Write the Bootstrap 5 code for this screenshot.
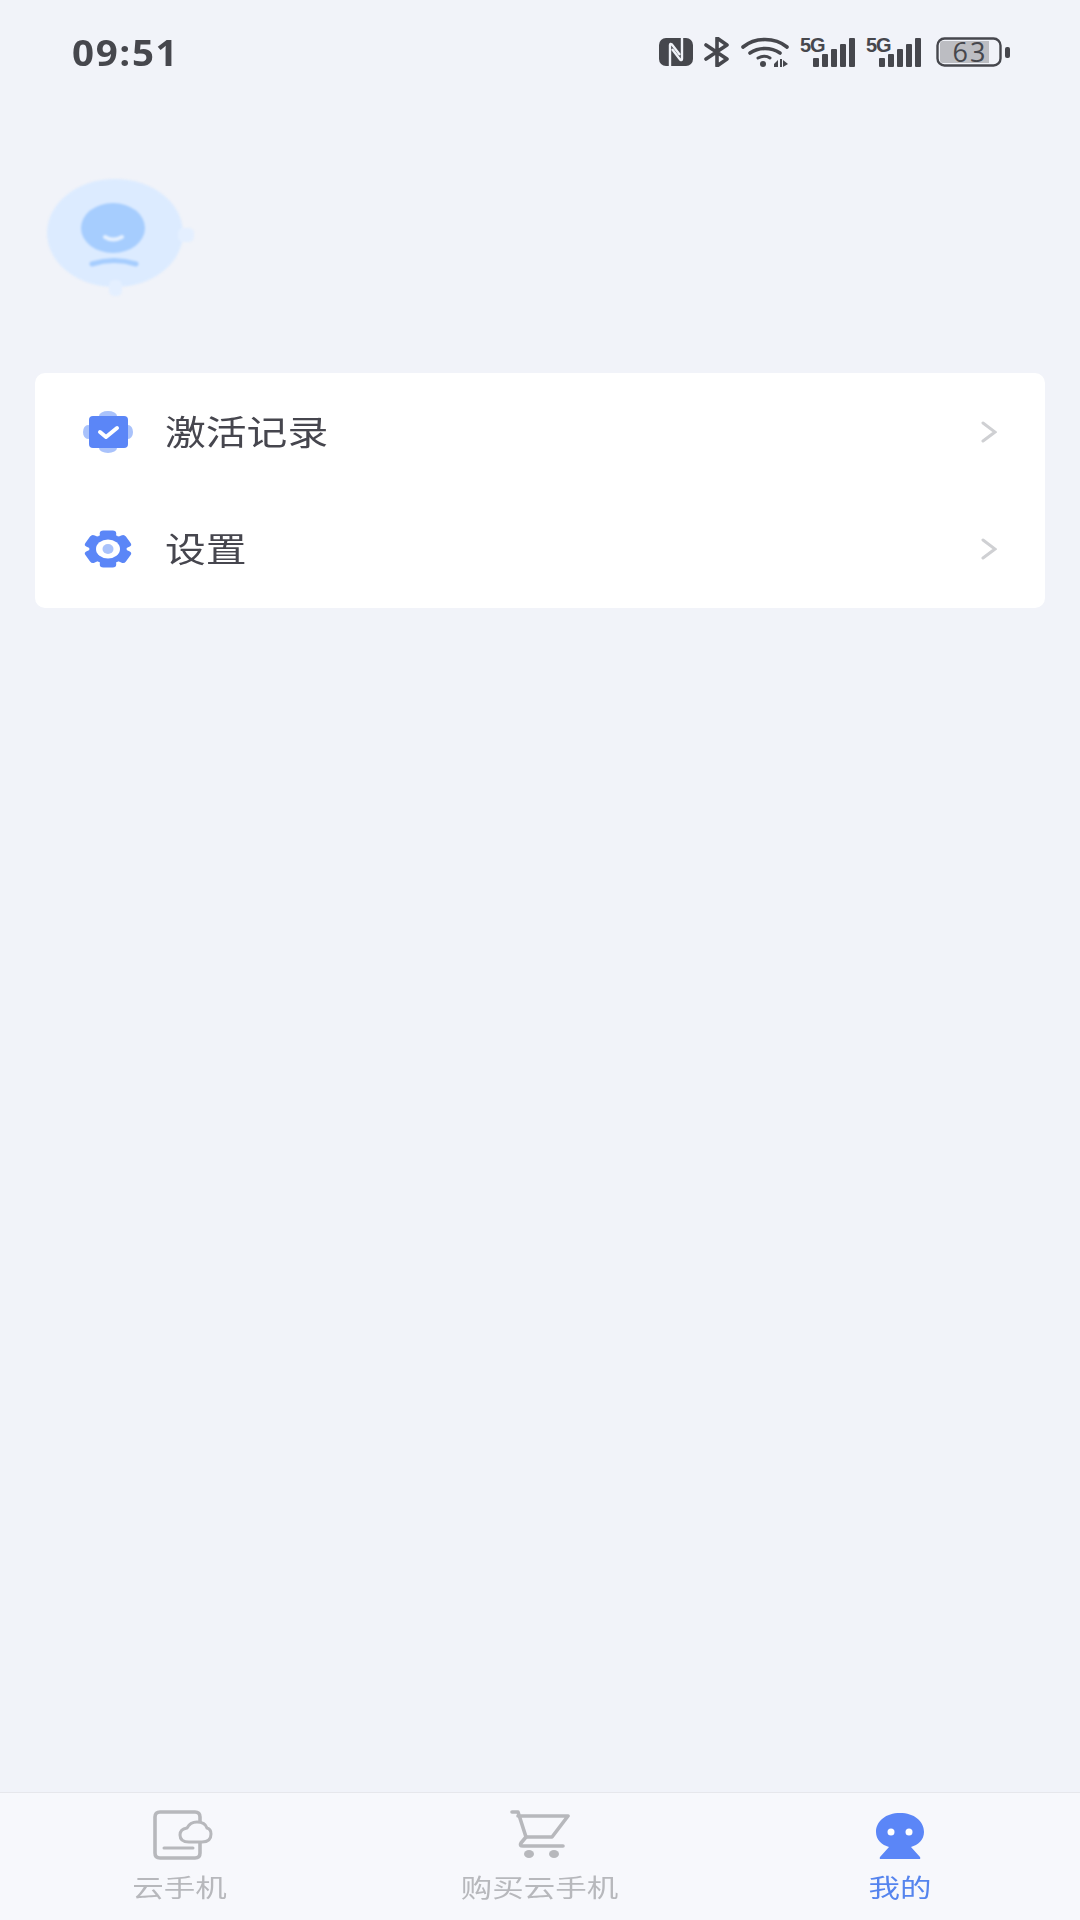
<!DOCTYPE html>
<html lang="zh-CN">
<head>
    <meta charset="UTF-8">
    <meta name="viewport" content="width=device-width, initial-scale=1.0">
    <title>我的</title>
    <link rel="stylesheet" href="https://cdn.jsdelivr.net/npm/bootstrap@5.3.0/dist/css/bootstrap.min.css">
    <style>
        body {
            width: 1080px;
            height: 1920px;
            background: #f1f3f9;
            font-family: "Liberation Sans", "Noto Sans CJK SC", sans-serif;
            overflow: hidden;
        }
        svg { display: block; flex-shrink: 0; }
        .status-row {
            height: 104px;
            padding: 0 70px 0 72px;
        }
        .clock {
            font-family: "Open Sans", sans-serif;
            font-weight: 700;
            font-size: 35px;
            letter-spacing: 1.5px;
            color: #46474d;
            line-height: 1;
            display: inline-block;
            transform: scaleX(1.1);
            transform-origin: left center;
        }
        .status-icons { gap: 11px; }
        .avatar-wrap { padding: 66px 0 0 40px; height: 269px; }
        .avatar-art { filter: blur(1px); }
        .menu-box {
            margin: 0 35px;
            height: 235px;
            background: #fff;
            border-radius: 10px;
        }
        .menu-line {
            height: 117.5px;
            padding: 0 48px 0 48px;
        }
        .menu-icon { width: 50px; margin-right: 32px; }
        .menu-text {
            font-family: "Noto Sans CJK SC", sans-serif;
            font-size: 34px;
            color: #46464e;
            line-height: 1;
            margin-top: -2px;
            transform: scaleX(1.2);
            transform-origin: left center;
        }
        .tabs {
            height: 128px;
            background: #f7f8fc;
            border-top: 1px solid #e6e7ec;
        }
        .tab-item { padding-top: 17px; }
        .tab-icon { height: 50px; }
        .tab-text {
            font-family: "Noto Sans CJK SC", sans-serif;
            font-size: 25px;
            line-height: 1;
            color: #b7b8bc;
            margin-top: 14px;
            transform: scaleX(1.26);
        }
        .tab-on { color: #5584ee; }
    </style>
</head>
<body class="d-flex flex-column">
    <div class="status-row d-flex justify-content-between align-items-center">
        <span class="clock">09:51</span>
        <div class="status-icons d-flex align-items-center">
            <svg width="34" height="28" viewBox="0 0 34 28">
                <rect width="34" height="28" rx="7" fill="#46474d"/>
                <path d="M11 28V7q0-2 2-.5L21 17" fill="none" stroke="#f1f3f9" stroke-width="2.4"/>
                <path d="M23 0v21q0 2-2 .5L13 11" fill="none" stroke="#f1f3f9" stroke-width="2.4"/>
            </svg>
            <svg width="26" height="30" viewBox="0 0 26 30">
                <path d="M2 8l21 14-10 7V1l10 7L2 22" fill="none" stroke="#46474d" stroke-width="3.6" stroke-linejoin="round" stroke-linecap="round"/>
            </svg>
            <svg width="48" height="30" viewBox="0 0 48 30">
                <path d="M2 10c12-10 32-10 44 0" fill="none" stroke="#46474d" stroke-width="3.6" stroke-linecap="round"/>
                <path d="M9 16c9-6 21-6 30 0" fill="none" stroke="#46474d" stroke-width="3.6" stroke-linecap="round"/>
                <path d="M17 21c4-2 9-2 12 0" fill="none" stroke="#46474d" stroke-width="3" stroke-linecap="round"/>
                <circle cx="22" cy="27" r="3" fill="#46474d"/>
                <path d="M33 27l4-4v7h-4zM39 22h2v8h-2zM42 23l5 4-5 3z" fill="#46474d"/>
            </svg>
            <svg width="55" height="40" viewBox="0 -5 55 40">
                <text x="0" y="15" font-family="Liberation Sans" font-weight="700" font-size="20" letter-spacing="-1" fill="#46474d">5G</text>
                <rect x="13" y="21" width="6" height="9" rx="1" fill="#46474d"/>
                <rect x="22" y="17" width="6" height="13" rx="1" fill="#46474d"/>
                <rect x="31" y="12" width="6" height="18" rx="1" fill="#46474d"/>
                <rect x="40" y="7" width="6" height="23" rx="1" fill="#46474d"/>
                <rect x="49" y="1" width="6" height="29" rx="1" fill="#46474d"/>
            </svg>
            <svg width="55" height="40" viewBox="0 -5 55 40">
                <text x="0" y="15" font-family="Liberation Sans" font-weight="700" font-size="20" letter-spacing="-1" fill="#46474d">5G</text>
                <rect x="13" y="21" width="6" height="9" rx="1" fill="#46474d"/>
                <rect x="22" y="17" width="6" height="13" rx="1" fill="#46474d"/>
                <rect x="31" y="12" width="6" height="18" rx="1" fill="#46474d"/>
                <rect x="40" y="7" width="6" height="23" rx="1" fill="#46474d"/>
                <rect x="49" y="1" width="6" height="29" rx="1" fill="#46474d"/>
            </svg>
            <svg class="ms-1" width="74" height="40" viewBox="0 -5 74 40">
                <rect x="1.5" y="1.5" width="63" height="27" rx="7" fill="none" stroke="#46474d" stroke-width="2.4"/>
                <path d="M7 4h46v22H7q-3 0-3-3V7q0-3 3-3z" fill="#bcbdc2"/>
                <text x="34" y="25" text-anchor="middle" font-family="Open Sans" font-size="27" letter-spacing="2" fill="#46474d">63</text>
                <rect x="69" y="10" width="5" height="11" rx="2" fill="#46474d"/>
            </svg>
        </div>
    </div>

    <div class="avatar-wrap">
        <svg class="avatar-art" width="160" height="130" viewBox="40 170 160 130">
            <ellipse cx="115" cy="233" rx="68" ry="54" fill="#dcebff"/>
            <rect x="178" y="228" width="16" height="14" rx="5" fill="#e4efff"/>
            <rect x="109" y="280" width="13" height="16" rx="5" fill="#e4efff"/>
            <ellipse cx="113" cy="228" rx="32" ry="25" fill="#a6cdfe"/>
            <path d="M105 237q8 5 17 0" fill="none" stroke="#e6f1ff" stroke-width="4" stroke-linecap="round"/>
            <path d="M92 264q22-7 44 0" fill="none" stroke="#a6cdfe" stroke-width="5" stroke-linecap="round"/>
        </svg>
    </div>

    <div class="menu-box">
        <div class="menu-line d-flex align-items-center">
            <svg class="menu-icon" width="50" height="42" viewBox="0 0 50 42">
                <ellipse cx="25" cy="5" rx="9" ry="5" fill="#a9c2fb"/>
                <ellipse cx="25" cy="37" rx="9" ry="5" fill="#a9c2fb"/>
                <ellipse cx="5" cy="21" rx="5" ry="7" fill="#a9c2fb"/>
                <ellipse cx="45" cy="21" rx="5" ry="7" fill="#a9c2fb"/>
                <rect x="6" y="5" width="39" height="32" rx="4" fill="#5b86f7"/>
                <path d="M17 21l6 5 11-9" fill="none" stroke="#fff" stroke-width="4" stroke-linecap="round" stroke-linejoin="round"/>
            </svg>
            <span class="menu-text me-auto">激活记录</span>
            <svg width="16" height="22" viewBox="0 0 16 22">
                <path d="M2 2l12 9-12 9" fill="none" stroke="#cfd0d3" stroke-width="3" stroke-linecap="round"/>
            </svg>
        </div>
        <div class="menu-line d-flex align-items-center">
            <svg class="menu-icon" width="50" height="38" viewBox="0 0 50 38">
                <g transform="translate(25 19) scale(1.17 .93)" fill="#5b86f7">
                    <circle r="16"/>
                    <rect x="-7" y="-20" width="14" height="40" rx="3"/>
                    <rect x="-7" y="-20" width="14" height="40" rx="3" transform="rotate(60)"/>
                    <rect x="-7" y="-20" width="14" height="40" rx="3" transform="rotate(120)"/>
                </g>
                <ellipse cx="25" cy="19" rx="12" ry="9.5" fill="#fff"/>
                <ellipse cx="25" cy="19" rx="5.5" ry="5" fill="#a9c2fb"/>
            </svg>
            <span class="menu-text me-auto">设置</span>
            <svg width="16" height="22" viewBox="0 0 16 22">
                <path d="M2 2l12 9-12 9" fill="none" stroke="#cfd0d3" stroke-width="3" stroke-linecap="round"/>
            </svg>
        </div>
    </div>

    <div class="flex-grow-1"></div>

    <div class="tabs row g-0 text-center">
        <div class="tab-item col-4 d-flex flex-column align-items-center">
            <svg class="tab-icon" width="70" height="50" viewBox="-8 0 70 50">
                <path d="M47 13V7q0-5-5-5H7Q2 2 2 7v36q0 5 5 5h35q5 0 5-5v-10" fill="none" stroke="#b7b8bc" stroke-width="3.6"/>
                <path d="M11 38h29" stroke="#b7b8bc" stroke-width="3" stroke-linecap="round"/>
                <path d="M36 32q-9 0-9-7 0-6 7-7 3-6 10-6 8 0 10 6 4 1 4 6 0 8-9 8z" fill="#f7f8fc" stroke="#b7b8bc" stroke-width="3"/>
            </svg>
            <span class="tab-text">云手机</span>
        </div>
        <div class="tab-item col-4 d-flex flex-column align-items-center">
            <svg class="tab-icon" width="60" height="50" viewBox="0 0 60 50">
                <path d="M2 2h6l8 25h26l16-21H8" fill="none" stroke="#b7b8bc" stroke-width="3.6" stroke-linecap="round" stroke-linejoin="round"/>
                <path d="M16 27l-5 6q-2 3 2 3h40" fill="none" stroke="#b7b8bc" stroke-width="3.6" stroke-linecap="round" stroke-linejoin="round"/>
                <ellipse cx="19" cy="44" rx="5" ry="4" fill="#b7b8bc"/>
                <ellipse cx="44" cy="44" rx="5" ry="4" fill="#b7b8bc"/>
            </svg>
            <span class="tab-text">购买云手机</span>
        </div>
        <div class="tab-item col-4 d-flex flex-column align-items-center">
            <svg class="tab-icon" width="50" height="50" viewBox="0 0 50 50">
                <path d="M25 3c14 0 24 8 24 19 0 8-6 13-13 15l9 10q1 2-1 2H6q-2 0-1-2l9-10C7 35 1 30 1 22 1 11 11 3 25 3z" fill="#5b86f7"/>
                <circle cx="16" cy="22" r="3.5" fill="#fff"/>
                <circle cx="34" cy="22" r="3.5" fill="#fff"/>
            </svg>
            <span class="tab-text tab-on">我的</span>
        </div>
    </div>

    <script src="https://cdn.jsdelivr.net/npm/bootstrap@5.3.0/dist/js/bootstrap.bundle.min.js"></script>
</body>
</html>
